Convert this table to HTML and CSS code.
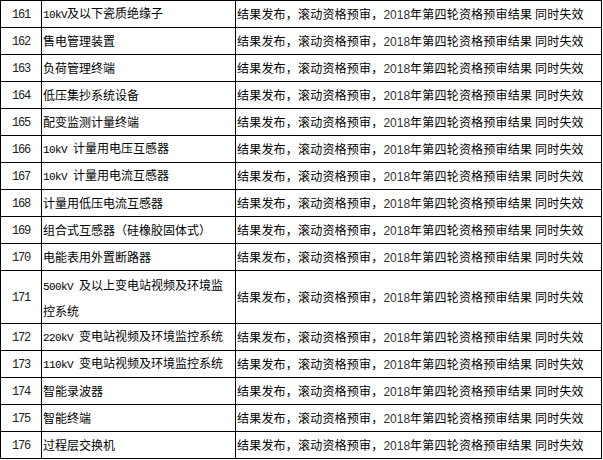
FILE: index.html
```html
<!DOCTYPE html>
<html lang="zh-CN">
<head>
<meta charset="utf-8">
<title>资格预审结果</title>
<link rel="stylesheet" href="styles.css">
</head>
<body>
<table class="grid">
  <colgroup>
    <col class="c-no">
    <col class="c-name">
    <col class="c-res">
  </colgroup>
  <tbody>
    <tr><td class="no">161</td><td class="name"><span class="en">10kV</span>及以下瓷质绝缘子</td><td class="res">结果发布，滚动资格预审，<span class="yr">2018</span>年第四轮资格预审结果 同时失效</td></tr>
    <tr><td class="no">162</td><td class="name">售电管理装置</td><td class="res">结果发布，滚动资格预审，<span class="yr">2018</span>年第四轮资格预审结果 同时失效</td></tr>
    <tr><td class="no">163</td><td class="name">负荷管理终端</td><td class="res">结果发布，滚动资格预审，<span class="yr">2018</span>年第四轮资格预审结果 同时失效</td></tr>
    <tr><td class="no">164</td><td class="name">低压集抄系统设备</td><td class="res">结果发布，滚动资格预审，<span class="yr">2018</span>年第四轮资格预审结果 同时失效</td></tr>
    <tr><td class="no">165</td><td class="name">配变监测计量终端</td><td class="res">结果发布，滚动资格预审，<span class="yr">2018</span>年第四轮资格预审结果 同时失效</td></tr>
    <tr><td class="no">166</td><td class="name"><span class="en">10kV </span>计量用电压互感器</td><td class="res">结果发布，滚动资格预审，<span class="yr">2018</span>年第四轮资格预审结果 同时失效</td></tr>
    <tr><td class="no">167</td><td class="name"><span class="en">10kV </span>计量用电流互感器</td><td class="res">结果发布，滚动资格预审，<span class="yr">2018</span>年第四轮资格预审结果 同时失效</td></tr>
    <tr><td class="no">168</td><td class="name">计量用低压电流互感器</td><td class="res">结果发布，滚动资格预审，<span class="yr">2018</span>年第四轮资格预审结果 同时失效</td></tr>
    <tr><td class="no">169</td><td class="name">组合式互感器（硅橡胶固体式）</td><td class="res">结果发布，滚动资格预审，<span class="yr">2018</span>年第四轮资格预审结果 同时失效</td></tr>
    <tr><td class="no">170</td><td class="name">电能表用外置断路器</td><td class="res">结果发布，滚动资格预审，<span class="yr">2018</span>年第四轮资格预审结果 同时失效</td></tr>
    <tr class="tall"><td class="no">171</td><td class="name wrap"><span class="en">500kV </span>及以上变电站视频及环境监<br>控系统</td><td class="res">结果发布，滚动资格预审，<span class="yr">2018</span>年第四轮资格预审结果 同时失效</td></tr>
    <tr><td class="no">172</td><td class="name"><span class="en">220kV </span>变电站视频及环境监控系统</td><td class="res">结果发布，滚动资格预审，<span class="yr">2018</span>年第四轮资格预审结果 同时失效</td></tr>
    <tr><td class="no">173</td><td class="name"><span class="en">110kV </span>变电站视频及环境监控系统</td><td class="res">结果发布，滚动资格预审，<span class="yr">2018</span>年第四轮资格预审结果 同时失效</td></tr>
    <tr><td class="no">174</td><td class="name">智能录波器</td><td class="res">结果发布，滚动资格预审，<span class="yr">2018</span>年第四轮资格预审结果 同时失效</td></tr>
    <tr><td class="no">175</td><td class="name">智能终端</td><td class="res">结果发布，滚动资格预审，<span class="yr">2018</span>年第四轮资格预审结果 同时失效</td></tr>
    <tr><td class="no">176</td><td class="name">过程层交换机</td><td class="res">结果发布，滚动资格预审，<span class="yr">2018</span>年第四轮资格预审结果 同时失效</td></tr>
  </tbody>
</table>
</body>
</html>
```

FILE: styles.css
```css
html, body {
  margin: 0;
  padding: 0;
  background: #ffffff;
}

body {
  font-family: "Noto Sans CJK SC", "Noto Sans", sans-serif;
  font-size: 12px;
  color: #000000;
}

.grid {
  border-collapse: collapse;
  table-layout: fixed;
  width: 601px;
}

.c-no { width: 41px; }
.c-name { width: 194px; }
.c-res { width: 366px; }

.grid tr {
  height: 27px;
}

.grid tr.tall {
  height: 53px;
}

.grid td {
  border: 1px solid #000000;
  padding: 0 0 0 1px;
  vertical-align: middle;
  white-space: nowrap;
  line-height: 16px;
}

.grid td.no {
  text-align: center;
  padding: 1px 0 0 0;
  font-family: "Liberation Mono", monospace;
  font-size: 12px;
  letter-spacing: -1.2px;
  color: #222222;
}

.grid td.res {
  letter-spacing: 0.2px;
}

.grid td.wrap {
  line-height: 23px;
}

.en {
  font-family: "Liberation Mono", monospace;
  font-size: 11px;
  letter-spacing: -0.6px;
}

.yr {
  font-family: "Liberation Sans", sans-serif;
  font-size: 12px;
  letter-spacing: 0;
  color: #333333;
}
```
